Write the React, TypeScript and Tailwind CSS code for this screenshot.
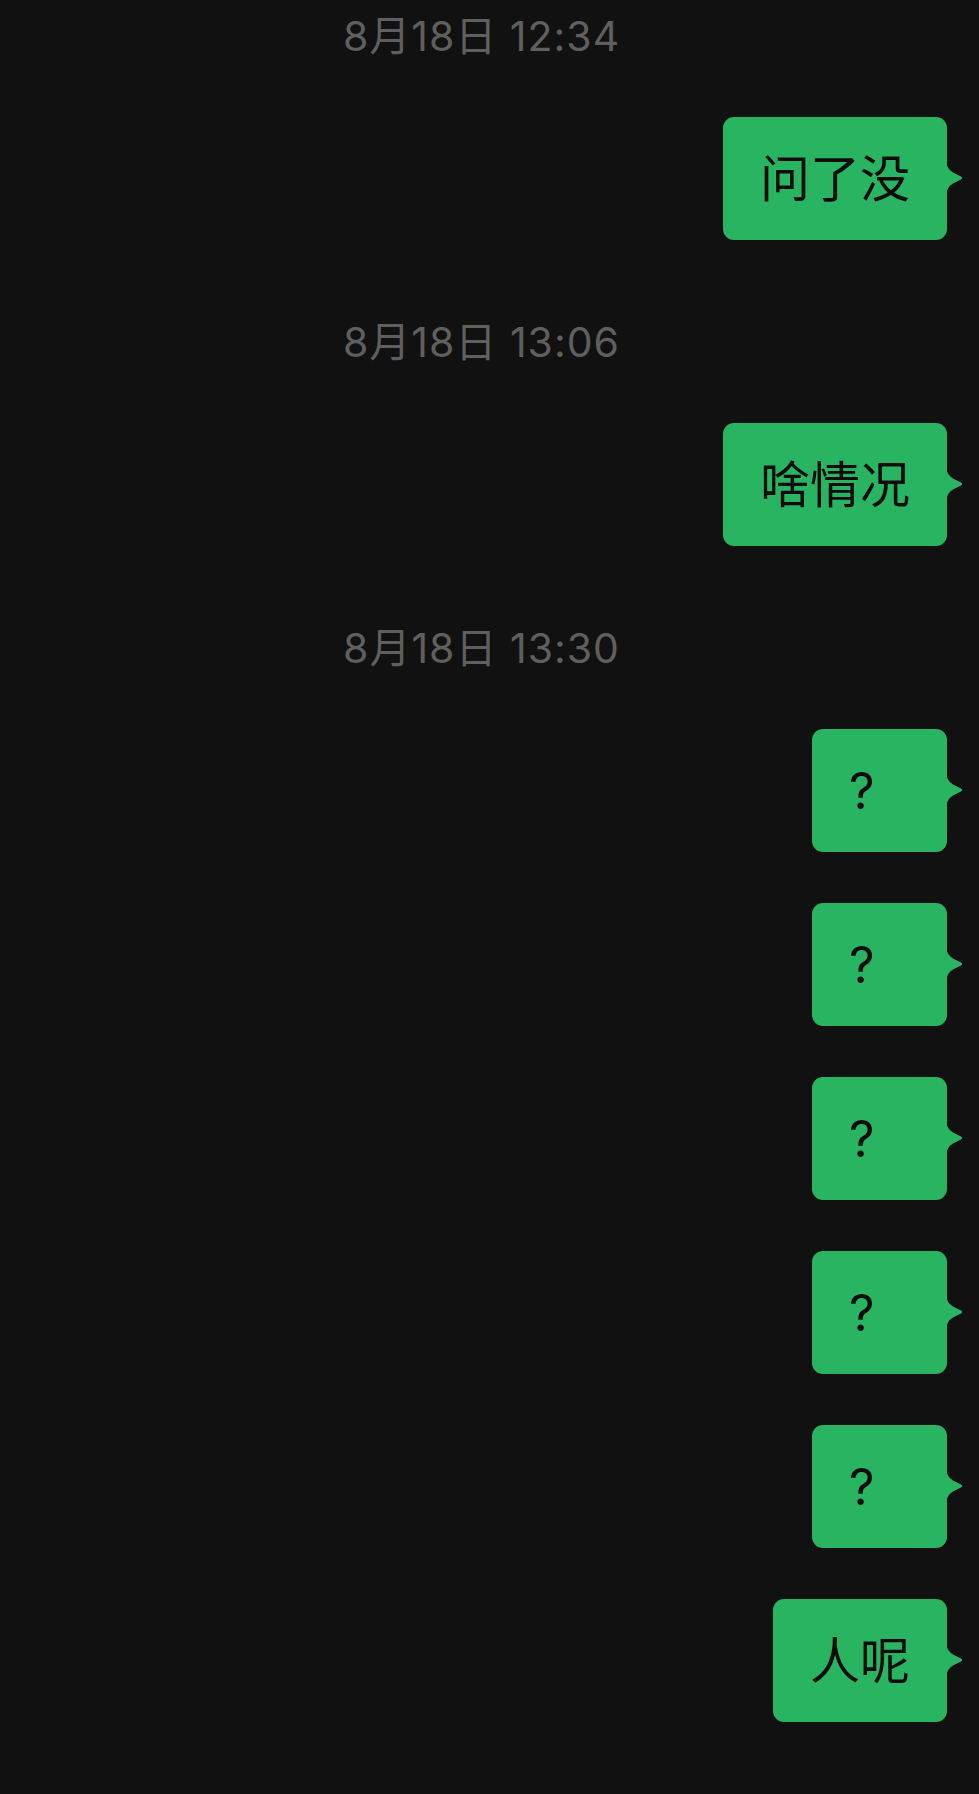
import React from "react";

const FONT = 'Inter, "Noto Sans CJK SC", sans-serif';

function Timestamp({ text, first }: { text: string; first?: boolean }) {
  return (
    <div
      className={`flex h-[72px] items-center justify-center pr-[16px] text-[41px] tracking-[1px] leading-none text-[#5f5f5f] ${first ? "" : "mt-[66px]"}`}
      style={{ fontFamily: FONT }}
    >
      {text}
    </div>
  );
}

function Bubble({ text, mt }: { text: string; mt: string }) {
  return (
    <div className={`flex justify-end pr-[32px] ${mt}`}>
      <div className="relative flex h-[123px] min-w-[135px] items-center rounded-[11px] bg-[#29b461] px-[37px] text-[50px] leading-none text-[#0c0c0c]" style={{ fontFamily: FONT }}>
        <span>{text}</span>
        <svg
          className="absolute right-[-17px] top-[44px]"
          width="18"
          height="34"
          viewBox="0 0 18 34"
        >
          <path d="M0 0 Q1 8 7 11.5 L15 15.5 Q17.5 17 15 18.5 L7 22.5 Q1 26 0 34 Z" fill="#29b461" />
        </svg>
      </div>
    </div>
  );
}

export default function App() {
  return (
    <div className="min-h-[1794px] w-full bg-[#111111]">
      <Timestamp text="8月18日 12:34" first />
      <Bubble text="问了没" mt="mt-[45px]" />
      <Timestamp text="8月18日 13:06" />
      <Bubble text="啥情况" mt="mt-[45px]" />
      <Timestamp text="8月18日 13:30" />
      <Bubble text="?" mt="mt-[45px]" />
      <Bubble text="?" mt="mt-[51px]" />
      <Bubble text="?" mt="mt-[51px]" />
      <Bubble text="?" mt="mt-[51px]" />
      <Bubble text="?" mt="mt-[51px]" />
      <Bubble text="人呢" mt="mt-[51px]" />
    </div>
  );
}
